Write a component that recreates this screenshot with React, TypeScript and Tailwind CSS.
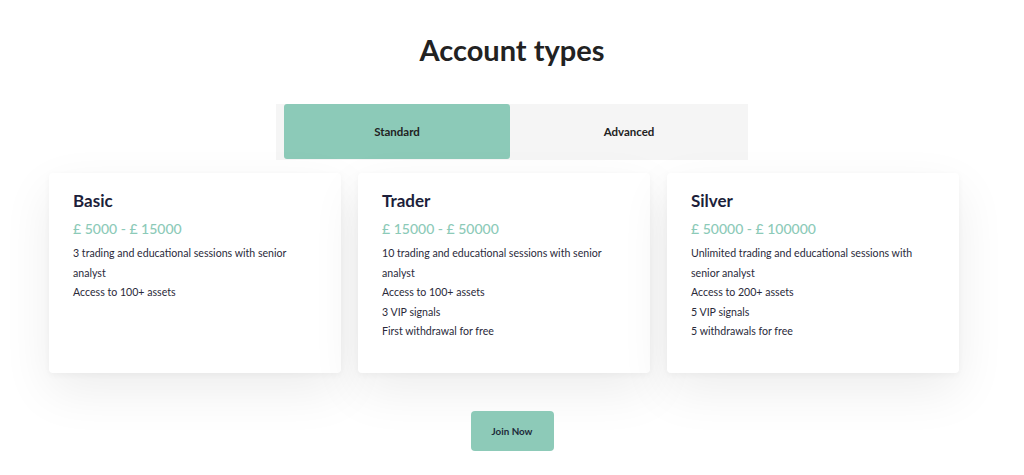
import React, { useState } from 'react';

const plans = [
  {
    name: 'Basic',
    price: '£ 5000 - £ 15000',
    items: ['3 trading and educational sessions with senior analyst', 'Access to 100+ assets'],
  },
  {
    name: 'Trader',
    price: '£ 15000 - £ 50000',
    items: [
      '10 trading and educational sessions with senior analyst',
      'Access to 100+ assets',
      '3 VIP signals',
      'First withdrawal for free',
    ],
  },
  {
    name: 'Silver',
    price: '£ 50000 - £ 100000',
    items: [
      'Unlimited trading and educational sessions with senior analyst',
      'Access to 200+ assets',
      '5 VIP signals',
      '5 withdrawals for free',
    ],
  },
];

export default function App() {
  const [tab, setTab] = useState('Standard');

  return (
    <div className="w-[1024px] h-[475px] bg-white overflow-hidden font-['Lato',sans-serif] text-[#222]">
      <div className="flex flex-col items-center">
        <h1 className="mt-[32px] text-[29px] leading-[36px] font-bold text-[#222]">Account types</h1>

        <div className="mt-[36px] w-[472px] h-[56px] bg-[#f5f5f5] flex pl-[8px]">
          <button
            onClick={() => setTab('Standard')}
            className={`w-[226px] h-[55px] text-[11.5px] font-bold text-[#222] ${
              tab === 'Standard' ? 'bg-[#8ccab8] rounded-[3px]' : ''
            }`}
          >
            Standard
          </button>
          <button
            onClick={() => setTab('Advanced')}
            className={`flex-1 h-[55px] text-[11.5px] font-bold text-[#222] ${
              tab === 'Advanced' ? 'bg-[#8ccab8] rounded-[3px]' : ''
            }`}
          >
            Advanced
          </button>
        </div>

        <div className="mt-[13px] w-[960px] pl-[17px] pr-[33px] flex gap-[17px]">
          {plans.map(p => (
            <div
              key={p.name}
              className="w-[292px] h-[200px] bg-white rounded-[4px] shadow-[0_2px_6px_rgba(0,0,0,0.04),0_18px_50px_rgba(0,0,0,0.075)] px-[24px] pt-[16px]"
            >
              <h2 className="text-[17px] leading-[24px] font-bold text-[#1d1f3b]">{p.name}</h2>
              <div className="mt-[7px] text-[14px] leading-[18px] font-medium text-[#8ccab8]">{p.price}</div>
              <ul className="mt-[6px] text-[10.6px] leading-[19.5px] text-[#2a2a3a] pr-[8px]">
                {p.items.map(i => (
                  <li key={i}>{i}</li>
                ))}
              </ul>
            </div>
          ))}
        </div>

        <button className="mt-[38px] w-[83px] h-[40px] rounded-[4px] bg-[#8dcab8] text-[9.8px] font-bold text-[#1d2b3a]">
          Join Now
        </button>
      </div>
    </div>
  );
}
